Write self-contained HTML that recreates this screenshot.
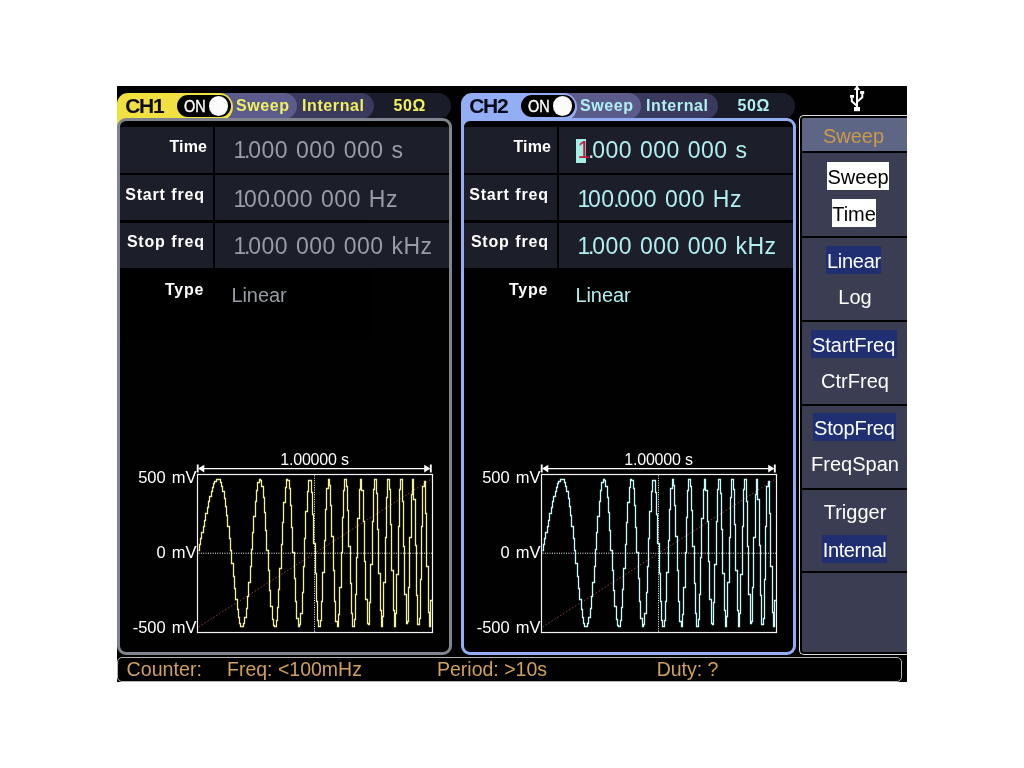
<!DOCTYPE html>
<html><head><meta charset="utf-8"><title>Sweep</title>
<style>
html,body{margin:0;padding:0;background:#fff;}
body{width:1024px;height:768px;position:relative;overflow:hidden;font-family:"Liberation Sans",sans-serif;}
#scr{will-change:transform;opacity:0.999;position:absolute;left:117px;top:86px;width:790px;height:596px;background:#000;overflow:hidden;}
#scr div{position:absolute;box-sizing:border-box;white-space:nowrap;}
.tab{top:7px;width:116px;height:28px;border-radius:11px 14px 14px 0;}
.tabfoot{top:30px;width:12px;height:10px;}
.pill{top:7px;height:26px;border-radius:13px;}
.p1{background:#5c5c8c;}
.p2{background:#3a3a5e;}
.p3{background:#1b1c29;}
.chname{top:8.700px;font-weight:bold;font-size:21px;line-height:22px;color:#0a0a18;letter-spacing:-1.3px;}
.toggle{top:9px;width:54px;height:22px;border-radius:11px;background:#000;}
.toggle .on{position:absolute;left:7px;top:1.700px;font-size:17px;line-height:19px;color:#fff;-webkit-text-stroke:0.4px #fff;transform:scaleX(0.85);transform-origin:0 0;}
.toggle .knob{position:absolute;left:31.700px;top:1.300px;width:19.6px;height:19.6px;border-radius:10px;background:#fbfbfb;}
.tabtxt{top:11px;font-weight:bold;font-size:16px;line-height:18px;letter-spacing:0.6px;}
.panel{top:32px;width:335px;height:537px;border:3px solid #80848f;border-radius:9px;background:#000;}
.cell{background:#1c1e2a;}
.lab{text-align:right;color:#fff;font-weight:bold;font-size:16px;line-height:18px;letter-spacing:0.8px;word-spacing:0.5px;}
.val{font-size:23px;line-height:26px;word-spacing:1px;letter-spacing:0.5px;}
.val i{font-style:normal;letter-spacing:-2.25px;}
.val i.d{margin-left:-1.5px;}
.typ{font-size:20px;line-height:22px;letter-spacing:-0.1px;}
.ax{text-align:right;color:#fff;font-size:16.5px;line-height:18px;word-spacing:1.5px;}
.tl{text-align:center;color:#fff;font-size:16px;line-height:17px;letter-spacing:-0.2px;}
.curb{width:10.2px;height:24px;background:#a2f0e6;}
.val b{font-weight:normal;color:#c01838;}
#menu{left:682px;top:29px;width:110px;height:540px;border:1.5px solid #dcdcdc;border-right:none;border-radius:5px 0 0 5px;background:#000;}
#menubg{left:685px;top:32px;width:106px;height:534px;background:#3b3d53;border-radius:2px 0 0 2px;}
#mtitle{left:685px;top:32px;width:106px;height:32.8px;background:#5e6685;color:#cc9a48;font-size:20px;line-height:36px;text-align:center;border-radius:2px 0 0 0;padding-right:3px;}
.sep{left:685px;width:106px;height:2px;background:#000;}
.mi{font-size:20px;line-height:29px;height:28px;color:#fff;text-align:center;}
.mi.w{background:#fff;color:#000;line-height:30.4px;}
.mi.b{background:#202e72;line-height:30.4px;}
#status{left:0px;top:571px;width:785.3px;height:25px;border:1px solid #b4b4b4;border-radius:5px;}
.st{top:573px;color:#d0a060;font-size:19.5px;line-height:20px;}
svg{position:absolute;left:0;top:0;}
</style></head><body>
<div id="scr">
<div class="pill p3" style="left:100px;width:234px"></div>
<div class="pill p2" style="left:100px;width:157px"></div>
<div class="pill p1" style="left:60px;width:120px"></div>
<div class="tab" style="left:0px;background:#f0e040"></div>
<div class="tabfoot" style="left:0px;background:#f0e040"></div>
<div class="chname" style="left:8.2px">CH1</div>
<div class="toggle" style="left:60px"><span class="on">ON</span><span class="knob"></span></div>
<div class="tabtxt" style="left:119px;color:#f0f060">Sweep</div>
<div class="tabtxt" style="left:185px;color:#f0f060">Internal</div>
<div class="tabtxt" style="left:276.5px;color:#f0f060">50&#937;</div>
<div class="panel" style="left:0px;border-color:#80848f"></div>
<div class="cell" style="left:3.3px;top:40.5px;width:93px;height:46px"></div>
<div class="cell" style="left:98.4px;top:40.5px;width:233.6px;height:46px"></div>
<div class="lab" style="left:3px;top:52.0px;width:87px;letter-spacing:0.1px">Time</div>
<div class="val" style="left:116.5px;top:51.0px;color:#989ca4"><i>1.</i>000 000 000 s</div>
<div class="cell" style="left:3.3px;top:89px;width:93px;height:45px"></div>
<div class="cell" style="left:98.4px;top:89px;width:233.6px;height:45px"></div>
<div class="lab" style="left:0px;top:100px;width:87.8px;">Start freq</div>
<div class="val" style="left:116.5px;top:99.5px;color:#989ca4"><i>1</i>00<i class="d">.</i>000 000 Hz</div>
<div class="cell" style="left:3.3px;top:136.5px;width:93px;height:45.5px"></div>
<div class="cell" style="left:98.4px;top:136.5px;width:233.6px;height:45.5px"></div>
<div class="lab" style="left:0px;top:147.0px;width:87.8px;">Stop freq</div>
<div class="val" style="left:116.5px;top:147.0px;color:#989ca4"><i>1.</i>000 000 000 kHz</div>
<div class="lab" style="left:0px;top:194.5px;width:87.3px">Type</div>
<div class="typ" style="left:114.5px;top:197.5px;color:#989ca4">Linear</div>
<div class="ax" style="left:0px;top:382px;width:79.5px">500 mV</div>
<div class="ax" style="left:0px;top:457px;width:79.5px">0 mV</div>
<div class="ax" style="left:0px;top:532px;width:79.5px">-500 mV</div>
<div class="tl" style="left:80px;top:365px;width:235px">1.00000 s</div>
<div class="pill p3" style="left:444px;width:234px"></div>
<div class="pill p2" style="left:444px;width:157px"></div>
<div class="pill p1" style="left:404px;width:120px"></div>
<div class="tab" style="left:344px;background:#94aef6"></div>
<div class="tabfoot" style="left:344px;background:#94aef6"></div>
<div class="chname" style="left:352.2px">CH2</div>
<div class="toggle" style="left:404px"><span class="on">ON</span><span class="knob"></span></div>
<div class="tabtxt" style="left:463px;color:#b0f0f0">Sweep</div>
<div class="tabtxt" style="left:529px;color:#b0f0f0">Internal</div>
<div class="tabtxt" style="left:620.5px;color:#b0f0f0">50&#937;</div>
<div class="panel" style="left:344px;border-color:#94aef6"></div>
<div class="cell" style="left:347.3px;top:40.5px;width:93px;height:46px"></div>
<div class="cell" style="left:442.4px;top:40.5px;width:233.6px;height:46px"></div>
<div class="lab" style="left:347px;top:52.0px;width:87px;letter-spacing:0.1px">Time</div>
<div class="curb" style="left:459px;top:53px"></div>
<div class="val" style="left:460.5px;top:51.0px;color:#b0f0f0"><i><b>1</b>.</i>000 000 000 s</div>
<div class="cell" style="left:347.3px;top:89px;width:93px;height:45px"></div>
<div class="cell" style="left:442.4px;top:89px;width:233.6px;height:45px"></div>
<div class="lab" style="left:344px;top:100px;width:87.8px;">Start freq</div>
<div class="val" style="left:460.5px;top:99.5px;color:#b0f0f0"><i>1</i>00<i class="d">.</i>000 000 Hz</div>
<div class="cell" style="left:347.3px;top:136.5px;width:93px;height:45.5px"></div>
<div class="cell" style="left:442.4px;top:136.5px;width:233.6px;height:45.5px"></div>
<div class="lab" style="left:344px;top:147.0px;width:87.8px;">Stop freq</div>
<div class="val" style="left:460.5px;top:147.0px;color:#b0f0f0"><i>1.</i>000 000 000 kHz</div>
<div class="lab" style="left:344px;top:194.5px;width:87.3px">Type</div>
<div class="typ" style="left:458.5px;top:197.5px;color:#b0f0f0">Linear</div>
<div class="ax" style="left:344px;top:382px;width:79.5px">500 mV</div>
<div class="ax" style="left:344px;top:457px;width:79.5px">0 mV</div>
<div class="ax" style="left:344px;top:532px;width:79.5px">-500 mV</div>
<div class="tl" style="left:424px;top:365px;width:235px">1.00000 s</div>
<div id="menu"></div><div id="menubg"></div>
<div id="mtitle">Sweep</div>
<div class="sep" style="top:64.6px"></div>
<div class="sep" style="top:149.5px"></div>
<div class="sep" style="top:233.5px"></div>
<div class="sep" style="top:317.5px"></div>
<div class="sep" style="top:401.5px"></div>
<div class="sep" style="top:485.2px"></div>
<div class="mi w" style="left:709.8px;width:62.5px;top:76.0px;letter-spacing:0px">Sweep</div>
<div class="mi w" style="left:714.9px;width:44.3px;top:113.0px;letter-spacing:0px">Time</div>
<div class="mi b" style="left:709.4px;width:55.1px;top:160.0px;letter-spacing:-0.3px">Linear</div>
<div class="mi " style="left:713.0px;width:50.0px;top:197.0px;letter-spacing:0px">Log</div>
<div class="mi b" style="left:693.5px;width:86.3px;top:244.0px;letter-spacing:0px">StartFreq</div>
<div class="mi " style="left:698.0px;width:80.0px;top:281.0px;letter-spacing:0px">CtrFreq</div>
<div class="mi b" style="left:696.2px;width:82.4px;top:326.5px;letter-spacing:-0.2px">StopFreq</div>
<div class="mi " style="left:693.0px;width:90.0px;top:364.0px;letter-spacing:0px">FreqSpan</div>
<div class="mi " style="left:698.0px;width:80.0px;top:412.0px;letter-spacing:0px">Trigger</div>
<div class="mi b" style="left:704.9px;width:65.3px;top:448.5px;letter-spacing:-0.4px">Internal</div>
<div id="status"></div>
<div class="st" style="left:9.500px;font-size:19.7px">Counter:</div>
<div class="st" style="left:110px">Freq: &lt;100mHz</div>
<div class="st" style="left:320px">Period: &gt;10s</div>
<div class="st" style="left:539.7px">Duty: ?</div>
<svg width="790" height="596" viewBox="117 86 790 596">
<path d="M199.5,468.6H429.5" stroke="#fff" stroke-width="1.3" fill="none"/>
<path d="M197.7,464.6V472.5M430.8,464.6V472.5" stroke="#fff" stroke-width="1.9" fill="none"/>
<path d="M198.1,468.6L204.3,464.70000000000005V472.5Z M430.4,468.6L424.2,464.70000000000005V472.5Z" fill="#fff"/>
<rect x="197.5" y="474.5" width="235.0" height="158.0" fill="none" stroke="#f4f4f4" stroke-width="1.2"/>
<path d="M198.5,627L431.5,479" stroke="#8c4444" stroke-width="1" stroke-dasharray="1.6,1.9" fill="none"/>
<path d="M198.5,553.2H432.5" stroke="#fff" stroke-width="1" stroke-dasharray="1,1.35" fill="none"/>
<path d="M314.5,475.5V632.5" stroke="#fff" stroke-width="1" stroke-dasharray="1,1.35" fill="none"/>
<path d="M198.5,550.5H199.5V544.5H200.5V538.5H201.5V532.5H203.5V526.5H204.5V520.5H205.5V513.5H207.5V507.5H208.5V501.5H209.5V496.5H211.5V491.5H212.5V487.5H213.5V483.5H214.5V481.5H216.5V479.5H217.5V479.5H218.5V479.5H220.5V482.5H221.5V486.5H222.5V491.5H224.5V498.5H225.5V506.5H226.5V515.5H227.5V526.5H229.5V538.5H230.5V550.5H231.5V563.5H233.5V576.5H234.5V588.5H235.5V599.5H237.5V609.5H238.5V617.5H239.5V623.5H240.5V626.5H242.5V626.5H243.5V623.5H244.5V617.5H246.5V608.5H247.5V596.5H248.5V582.5H250.5V566.5H251.5V549.5H252.5V532.5H253.5V516.5H255.5V501.5H256.5V490.5H257.5V482.5H259.5V479.5H260.5V480.5H261.5V486.5H263.5V497.5H264.5V512.5H265.5V530.5H266.5V550.5H268.5V570.5H269.5V590.5H270.5V606.5H272.5V619.5H273.5V625.5H274.5V626.5H276.5V620.5H277.5V607.5H278.5V589.5H279.5V568.5H281.5V544.5H282.5V522.5H283.5V502.5H285.5V487.5H286.5V479.5H287.5V480.5H289.5V488.5H290.5V505.5H291.5V527.5H292.5V552.5H294.5V578.5H295.5V601.5H296.5V618.5H298.5V626.5H299.5V624.5H300.5V613.5H302.5V592.5H303.5V566.5H304.5V538.5H305.5V511.5H307.5V491.5H308.5V480.5H309.5V480.5H311.5V492.5H312.5V514.5H313.5V543.5H315.5V573.5H316.5V601.5H317.5V620.5H318.5V626.5H320.5V620.5H321.5V601.5H322.5V572.5H324.5V540.5H325.5V509.5H326.5V488.5H328.5V479.5H329.5V485.5H330.5V505.5H331.5V536.5H333.5V570.5H334.5V601.5H335.5V621.5H337.5V626.5H338.5V614.5H339.5V587.5H341.5V552.5H342.5V517.5H343.5V490.5H344.5V479.5H346.5V486.5H347.5V510.5H348.5V546.5H350.5V583.5H351.5V613.5H352.5V626.5H354.5V619.5H355.5V594.5H356.5V557.5H357.5V518.5H359.5V489.5H360.5V479.5H361.5V490.5H363.5V521.5H364.5V561.5H365.5V599.5H367.5V623.5H368.5V624.5H369.5V602.5H370.5V564.5H372.5V521.5H373.5V489.5H374.5V479.5H376.5V493.5H377.5V529.5H378.5V573.5H380.5V610.5H381.5V626.5H382.5V616.5H383.5V582.5H385.5V537.5H386.5V497.5H387.5V479.5H389.5V489.5H390.5V524.5H391.5V570.5H393.5V610.5H394.5V626.5H395.5V613.5H396.5V574.5H398.5V526.5H399.5V489.5H400.5V479.5H402.5V501.5H403.5V546.5H404.5V594.5H406.5V623.5H407.5V621.5H408.5V587.5H409.5V537.5H411.5V494.5H412.5V479.5H413.5V499.5H415.5V545.5H416.5V595.5H417.5V624.5H419.5V618.5H420.5V579.5H421.5V526.5H422.5V486.5H424.5V481.5H425.5V513.5H426.5V566.5H428.5V612.5H429.5V626.5H430.5V600.5H432.5" stroke="#f0f0a0" stroke-width="1.3" fill="none" stroke-linejoin="miter"/>
<path d="M543.5,468.6H773.5" stroke="#fff" stroke-width="1.3" fill="none"/>
<path d="M541.7,464.6V472.5M774.8,464.6V472.5" stroke="#fff" stroke-width="1.9" fill="none"/>
<path d="M542.1,468.6L548.3,464.70000000000005V472.5Z M774.4,468.6L768.2,464.70000000000005V472.5Z" fill="#fff"/>
<rect x="541.5" y="474.5" width="235.0" height="158.0" fill="none" stroke="#f4f4f4" stroke-width="1.2"/>
<path d="M542.5,627L775.5,479" stroke="#8c4444" stroke-width="1" stroke-dasharray="1.6,1.9" fill="none"/>
<path d="M542.5,553.2H776.5" stroke="#fff" stroke-width="1" stroke-dasharray="1,1.35" fill="none"/>
<path d="M658.5,475.5V632.5" stroke="#fff" stroke-width="1" stroke-dasharray="1,1.35" fill="none"/>
<path d="M542.5,550.5H543.5V544.5H544.5V538.5H545.5V532.5H547.5V526.5H548.5V520.5H549.5V513.5H551.5V507.5H552.5V501.5H553.5V496.5H555.5V491.5H556.5V487.5H557.5V483.5H558.5V481.5H560.5V479.5H561.5V479.5H562.5V479.5H564.5V482.5H565.5V486.5H566.5V491.5H568.5V498.5H569.5V506.5H570.5V515.5H571.5V526.5H573.5V538.5H574.5V550.5H575.5V563.5H577.5V576.5H578.5V588.5H579.5V599.5H581.5V609.5H582.5V617.5H583.5V623.5H584.5V626.5H586.5V626.5H587.5V623.5H588.5V617.5H590.5V608.5H591.5V596.5H592.5V582.5H594.5V566.5H595.5V549.5H596.5V532.5H597.5V516.5H599.5V501.5H600.5V490.5H601.5V482.5H603.5V479.5H604.5V480.5H605.5V486.5H607.5V497.5H608.5V512.5H609.5V530.5H610.5V550.5H612.5V570.5H613.5V590.5H614.5V606.5H616.5V619.5H617.5V625.5H618.5V626.5H620.5V620.5H621.5V607.5H622.5V589.5H623.5V568.5H625.5V544.5H626.5V522.5H627.5V502.5H629.5V487.5H630.5V479.5H631.5V480.5H633.5V488.5H634.5V505.5H635.5V527.5H636.5V552.5H638.5V578.5H639.5V601.5H640.5V618.5H642.5V626.5H643.5V624.5H644.5V613.5H646.5V592.5H647.5V566.5H648.5V538.5H649.5V511.5H651.5V491.5H652.5V480.5H653.5V480.5H655.5V492.5H656.5V514.5H657.5V543.5H659.5V573.5H660.5V601.5H661.5V620.5H662.5V626.5H664.5V620.5H665.5V601.5H666.5V572.5H668.5V540.5H669.5V509.5H670.5V488.5H672.5V479.5H673.5V485.5H674.5V505.5H675.5V536.5H677.5V570.5H678.5V601.5H679.5V621.5H681.5V626.5H682.5V614.5H683.5V587.5H685.5V552.5H686.5V517.5H687.5V490.5H688.5V479.5H690.5V486.5H691.5V510.5H692.5V546.5H694.5V583.5H695.5V613.5H696.5V626.5H698.5V619.5H699.5V594.5H700.5V557.5H701.5V518.5H703.5V489.5H704.5V479.5H705.5V490.5H707.5V521.5H708.5V561.5H709.5V599.5H711.5V623.5H712.5V624.5H713.5V602.5H714.5V564.5H716.5V521.5H717.5V489.5H718.5V479.5H720.5V493.5H721.5V529.5H722.5V573.5H724.5V610.5H725.5V626.5H726.5V616.5H727.5V582.5H729.5V537.5H730.5V497.5H731.5V479.5H733.5V489.5H734.5V524.5H735.5V570.5H737.5V610.5H738.5V626.5H739.5V613.5H740.5V574.5H742.5V526.5H743.5V489.5H744.5V479.5H746.5V501.5H747.5V546.5H748.5V594.5H750.5V623.5H751.5V621.5H752.5V587.5H753.5V537.5H755.5V494.5H756.5V479.5H757.5V499.5H759.5V545.5H760.5V595.5H761.5V624.5H763.5V618.5H764.5V579.5H765.5V526.5H766.5V486.5H768.5V481.5H769.5V513.5H770.5V566.5H772.5V612.5H773.5V626.5H774.5V600.5H776.5" stroke="#c8fafa" stroke-width="1.3" fill="none" stroke-linejoin="miter"/>
<g fill="#fff"><rect x="856" y="86" width="2" height="22"/><path d="M857,85.300L853.700,90H860.300Z"/>
<rect x="860.200" y="91" width="4" height="3"/><rect x="850" y="95" width="4" height="2.800"/><rect x="854" y="107" width="6" height="4.200"/></g>
<path d="M862.300,93.500V97.200L857.500,101.500M851.800,97.500V101.200L856.500,105.500" stroke="#fff" stroke-width="2" fill="none"/>
</svg>
</div>
</body></html>
